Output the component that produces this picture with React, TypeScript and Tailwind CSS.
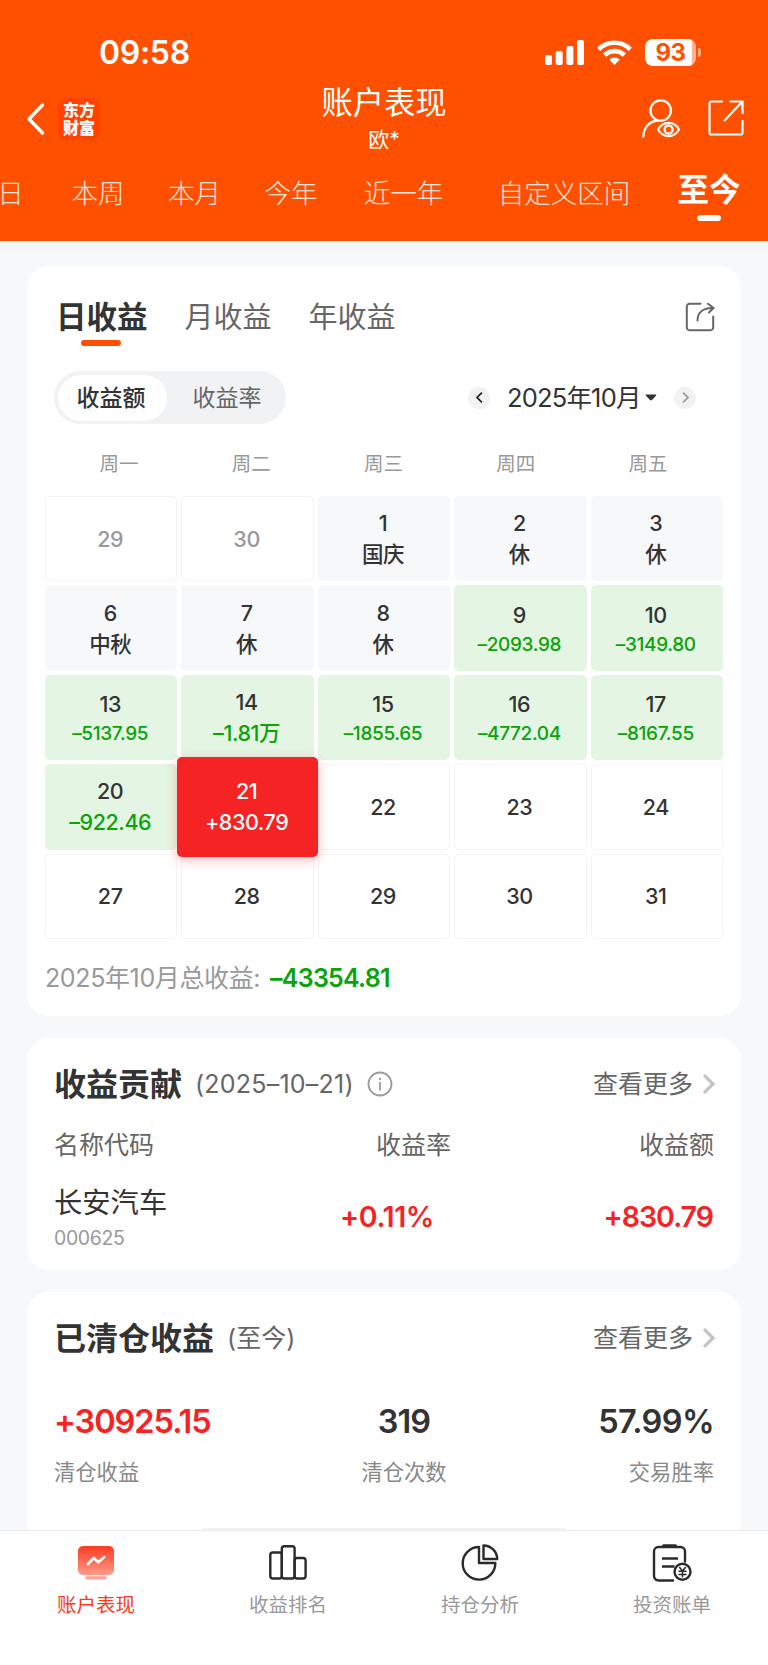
import React from "react";
import clsx from "clsx";

type DayKind = "outside" | "holiday" | "loss" | "selected" | "empty";

type Day = {
  day: number;
  kind: DayKind;
  note?: string;
};

const RANGES = [
  { label: "日", width: "w-[49px] -ml-[14px]" },
  { label: "本周", width: "w-[126px]" },
  { label: "本月", width: "w-[67px]" },
  { label: "今年", width: "w-[126px]" },
  { label: "近一年", width: "w-[99px]" },
  { label: "自定义区间", width: "w-[222px]" },
];

const WEEKDAYS = ["周一", "周二", "周三", "周四", "周五"];

const DAYS: Day[] = [
  { day: 29, kind: "outside" },
  { day: 30, kind: "outside" },
  { day: 1, kind: "holiday", note: "国庆" },
  { day: 2, kind: "holiday", note: "休" },
  { day: 3, kind: "holiday", note: "休" },
  { day: 6, kind: "holiday", note: "中秋" },
  { day: 7, kind: "holiday", note: "休" },
  { day: 8, kind: "holiday", note: "休" },
  { day: 9, kind: "loss", note: "–2093.98" },
  { day: 10, kind: "loss", note: "–3149.80" },
  { day: 13, kind: "loss", note: "–5137.95" },
  { day: 14, kind: "loss", note: "–1.81万" },
  { day: 15, kind: "loss", note: "–1855.65" },
  { day: 16, kind: "loss", note: "–4772.04" },
  { day: 17, kind: "loss", note: "–8167.55" },
  { day: 20, kind: "loss", note: "–922.46" },
  { day: 21, kind: "selected", note: "+830.79" },
  { day: 22, kind: "empty" },
  { day: 23, kind: "empty" },
  { day: 24, kind: "empty" },
  { day: 27, kind: "empty" },
  { day: 28, kind: "empty" },
  { day: 29, kind: "empty" },
  { day: 30, kind: "empty" },
  { day: 31, kind: "empty" },
];

export default function App() {
  return (
    <div className="flex h-[1665px] w-[768px] flex-col overflow-hidden bg-[#f6f8fa] font-['Inter','Noto_Sans_CJK_SC',sans-serif] text-[#333]">
      <Header />
      <main className="flex min-h-0 flex-1 flex-col gap-[22px] overflow-hidden px-[27px] pt-[25px]">
        <CalendarCard />
        <ContributionCard />
        <ClearedCard />
      </main>
      <BottomNav />
    </div>
  );
}

function Header() {
  return (
    <header className="flex h-[241px] shrink-0 flex-col bg-[#ff5000] text-white">
      <div className="flex h-[84px] items-center pt-[21px] pr-[67px] pl-[99px]">
        <span className="text-[32px] leading-none font-semibold tracking-[-0.01em]">09:58</span>
        <div className="ml-auto flex items-center gap-[13px]">
          <SignalIcon />
          <WifiIcon />
          <Battery />
        </div>
      </div>

      <div className="grid h-[77px] grid-cols-[200px_1fr_200px]">
        <div className="flex items-center pb-[8px] pl-[26px]">
          <svg width="19" height="34" viewBox="0 0 19 34" fill="none" stroke="white" strokeWidth="3.4" strokeLinecap="round" strokeLinejoin="round">
            <path d="M16.5 3 3 17l13.500 14" />
          </svg>
          <div className="ml-[13px] flex h-[42px] w-[42px] flex-col items-center justify-center rounded-[9px] bg-[#ff4200] text-[16px] leading-[18px] font-black">
            <span>东方</span>
            <span>财富</span>
          </div>
        </div>
        <div className="flex flex-col items-center">
          <h1 className="h-[37px] pt-px text-[31.300px] leading-[37px] font-normal">账户表现</h1>
          <span className="mt-[4px] text-[21px] leading-[30px]">欧*</span>
        </div>
        <div className="flex items-start justify-end gap-[27px] pt-[15px] pr-[23px]">
          <PersonEyeIcon />
          <svg width="38" height="38" viewBox="0 0 38 38" fill="none" stroke="white" strokeWidth="2.200">
            <path d="M16 2.500H4.500a2 2 0 0 0-2 2v29a2 2 0 0 0 2 2h29a2 2 0 0 0 2-2V21" />
            <path d="M22.500 2.500h13V15M35 3 17 22" />
          </svg>
        </div>
      </div>

      <nav className="flex h-[64px] items-center">
        {RANGES.map((r) => (
          <span
            key={r.label}
            className={clsx("shrink-0 text-center text-[26.500px] leading-[40px] font-light whitespace-nowrap text-white/85", r.width)}
          >
            {r.label}
          </span>
        ))}
        <span className="relative ml-[2px] w-[64px] text-center text-[31.500px] leading-[40px] font-bold whitespace-nowrap">
          <span className="relative -top-[3px]">至今</span>
          <i className="absolute bottom-[-8px] left-[20px] h-[6px] w-[24px] rounded-full bg-white" />
        </span>
      </nav>
    </header>
  );
}

function CalendarCard() {
  return (
    <section className="flex h-[750px] shrink-0 flex-col rounded-[22px] bg-white pt-[30px]">
      <div className="flex h-[41px] items-center pr-[26px] pl-[29px] whitespace-nowrap">
        <span className="relative text-[30.500px] leading-[41px] font-bold">
          日收益
          <i className="absolute top-[44px] left-[25px] h-[6px] w-[40px] rounded-full bg-[#ff5000]" />
        </span>
        <span className="ml-[37px] pt-px text-[29px] leading-[41px] text-[#666]">月收益</span>
        <span className="ml-[37px] pt-px text-[29px] leading-[41px] text-[#666]">年收益</span>
        <svg className="ml-auto" width="30" height="30" viewBox="0 0 30 30" fill="none" stroke="#666" strokeWidth="2" strokeLinecap="round">
          <path d="M15.500 1.800H4.500a2.700 2.700 0 0 0-2.700 2.700v21a2.700 2.700 0 0 0 2.700 2.700h21a2.700 2.700 0 0 0 2.700-2.700V14.500" />
          <path d="M12.500 18.500C12.500 10.500 18 6 27.500 6M23 1.800 28.500 6 24 10.500" />
        </svg>
      </div>

      <div className="mt-[34px] flex h-[53px] items-center pr-[45px] pl-[27px]">
        <div className="flex h-[53px] w-[232px] items-center rounded-full bg-[#f1f2f4] p-[3.500px] text-[23px]">
          <span className="flex h-[46px] w-[109px] items-center justify-center rounded-full bg-white pt-px pr-[2px] font-medium">收益额</span>
          <span className="flex flex-1 items-center justify-center pt-px pl-[5px] text-[#666]">收益率</span>
        </div>
        <div className="ml-auto flex items-center">
          <span className="flex h-[22px] w-[22px] items-center justify-center rounded-full bg-[#f1f2f4]">
            <Chevron dir="left" className="h-[11px] w-[7px] text-[#222]" />
          </span>
          <span className="ml-[17px] w-[133px] text-[25.500px] leading-[40px] tracking-[-0.032em] whitespace-nowrap">2025年10月</span>
          <svg className="ml-[5px]" width="12" height="7" viewBox="0 0 12 7" fill="#333">
            <path d="M1.500.5h9c.8 0 1.100.8.5 1.300L7 6a1.500 1.500 0 0 1-2 0L1 1.800C.400 1.300.7.5 1.500.5Z" />
          </svg>
          <span className="ml-[17px] flex h-[22px] w-[22px] items-center justify-center rounded-full bg-[#f1f2f4]">
            <Chevron dir="right" className="h-[11px] w-[7px] text-[#999]" />
          </span>
        </div>
      </div>

      <div className="mr-[27px] ml-[26px] mt-[25px] grid h-[30px] grid-cols-5 text-center text-[19.500px] leading-[30px] text-[#999]">
        {WEEKDAYS.map((w) => (
          <span key={w}>{w}</span>
        ))}
      </div>

      <div className="mx-[18px] mt-[17px] grid auto-rows-[85.400px] grid-cols-5 gap-[4px]">
        {DAYS.map((d, i) => (
          <DayCell key={i} {...d} />
        ))}
      </div>

      <div className="mt-[20px] flex h-[40px] items-center pl-[18px] text-[25px] whitespace-nowrap">
        <span className="tracking-[-0.015em] text-[#999]">2025年10月总收益:</span>
        <span className="ml-[10px] font-semibold tracking-[-0.03em] text-[#0aa30a]">–43354.81</span>
      </div>
    </section>
  );
}

function DayCell({ day, kind, note }: Day) {
  // long amounts drop one size so they stay inside the cell
  const small = !!note && note.length > 7;
  const selected = kind === "selected";

  return (
    <div className="relative">
      <div
        className={clsx(
          "absolute flex flex-col items-center justify-center rounded-[5px] pr-[2px] text-[21.500px] leading-[31px] font-medium tracking-[-0.02em]",
          selected ? "-inset-x-[4px] -inset-y-[7.300px] z-10 bg-[#f52323] text-white shadow-[0_3px_12px_rgba(245,35,35,0.3)]" : "inset-0",
          kind === "outside" && "border border-[#f3f4f6] text-[#999]",
          kind === "empty" && "border border-[#f3f4f6]",
          kind === "holiday" && "bg-[#f6f8fa]",
          kind === "loss" && "bg-[#e4f5e4]",
          small && "pt-[3px]",
          !small && "pt-px",
        )}
      >
        <span className={clsx(small && "leading-[29px]")}>{day}</span>
        {note ? (
          <span
            className={clsx(
              kind === "loss" && "text-[#0aa30a]",
              small && "text-[19px] leading-[29px] tracking-[-0.018em]",
            )}
          >
            {note}
          </span>
        ) : null}
      </div>
    </div>
  );
}

function ContributionCard() {
  return (
    <section className="h-[232px] shrink-0 rounded-[22px] bg-white px-[27px] pt-[26px]">
      <CardTitle title="收益贡献" sub="(2025–10–21)" info />
      <div className="mt-[22px] grid h-[40px] grid-cols-3 items-center text-[25px] text-[#666]">
        <span>名称代码</span>
        <span className="pr-[43px] text-right">收益率</span>
        <span className="text-right">收益额</span>
      </div>
      <div className="mt-[15px] grid h-[72px] grid-cols-3 items-center">
        <div className="flex flex-col">
          <span className="pt-px text-[28.300px] leading-[40px]">长安汽车</span>
          <span className="text-[19.500px] leading-[30px] tracking-[-0.02em] text-[#999]">000625</span>
        </div>
        <span className="pr-[60px] text-right text-[28.500px] font-semibold tracking-[-0.015em] text-[#f52323]">+0.11%</span>
        <span className="pr-px text-right text-[28.500px] font-semibold tracking-[-0.035em] text-[#f52323]">+830.79</span>
      </div>
    </section>
  );
}

function ClearedCard() {
  return (
    <section className="relative h-[260px] shrink-0 rounded-t-[22px] bg-white px-[27px] pt-[26px]">
      <CardTitle title="已清仓收益" sub="(至今)" />
      <div className="mt-[39px] grid grid-cols-3">
        <Stat value="+30925.15" label="清仓收益" className="items-start tracking-[-1.050px] text-[#f52323]" />
        <Stat value="319" label="清仓次数" className="items-center pl-[40px] tracking-[-0.900px]" />
        <Stat value="57.99%" label="交易胜率" className="items-end tracking-[-0.600px]" />
      </div>
      <div className="absolute top-[236px] left-[171px] h-[20px] w-[372px] rounded-t-[6px] bg-[#f1f2f4]" />
    </section>
  );
}

function CardTitle({ title, sub, info }: { title: string; sub: string; info?: boolean }) {
  return (
    <div className="flex h-[40px] items-center whitespace-nowrap">
      <h2 className="pt-px text-[32px] leading-[40px] font-bold">{title}</h2>
      <span className={clsx("ml-[13px] pt-px text-[25px] text-[#666]", info && "tracking-[0.009em]")}>{sub}</span>
      {info ? (
        <svg className="ml-[13px]" width="26" height="26" viewBox="0 0 26 26" fill="none" stroke="#999" strokeWidth="1.800">
          <circle cx="13" cy="13" r="11.500" />
          <path d="M13 11v8.500M13 6.700v2.200" />
        </svg>
      ) : null}
      <span className="ml-auto pt-px text-[25px] text-[#666]">查看更多</span>
      <Chevron dir="right" className="-mr-px ml-[9px] h-[20px] w-[13px] text-[#c4c4c4]" />
    </div>
  );
}

function Stat({ value, label, className }: { value: string; label: string; className: string }) {
  return (
    <div className={clsx("flex flex-col", className)}>
      <span className="text-[32.500px] leading-[50px] font-semibold">{value}</span>
      <span className="mt-[10px] text-[21.300px] leading-[30px] tracking-normal text-[#888]">{label}</span>
    </div>
  );
}

function BottomNav() {
  const items = [
    { label: "账户表现", icon: <ScreenIcon />, active: true },
    { label: "收益排名", icon: <BarsIcon /> },
    { label: "持仓分析", icon: <PieIcon /> },
    { label: "投资账单", icon: <BillIcon /> },
  ];
  return (
    <nav className="grid h-[135px] shrink-0 grid-cols-4 border-t border-[#ececee] bg-white pt-[13px]">
      {items.map((it) => (
        <div key={it.label} className="flex flex-col items-center">
          {it.icon}
          <span className={clsx("mt-[6px] text-[19.500px] leading-[30px]", it.active ? "text-[#fb3a20]" : "text-[#999]")}>
            {it.label}
          </span>
        </div>
      ))}
    </nav>
  );
}

function Chevron({ dir, className }: { dir: "left" | "right"; className: string }) {
  return (
    <svg className={className} viewBox="0 0 13 20" fill="none" stroke="currentColor" strokeWidth="3.200">
      <path d={dir === "left" ? "M11 1 2 10l9 9" : "M2 1l9 9-9 9"} />
    </svg>
  );
}

function SignalIcon() {
  return (
    <svg width="39" height="25" viewBox="0 0 39 25" fill="white">
      <rect x="0" y="15" width="7" height="10" rx="2" />
      <rect x="10.700" y="11" width="7" height="14" rx="2" />
      <rect x="21.400" y="6" width="7" height="19" rx="2" />
      <rect x="32" y="0" width="7" height="25" rx="2" />
    </svg>
  );
}

function WifiIcon() {
  return (
    <svg width="35" height="25" viewBox="0 0 35 25" fill="none" stroke="white" strokeWidth="4.600">
      <path d="M1.700 9.300a22.500 22.500 0 0 1 31.600 0" />
      <path d="M7.600 15.100a14.200 14.200 0 0 1 19.800 0" />
      <path d="M17.500 25l-5.300-5.400a7.600 7.600 0 0 1 10.600 0Z" fill="white" stroke="none" />
    </svg>
  );
}

function Battery() {
  return (
    <div className="flex items-center gap-[2px]">
      <div className="flex h-[27px] w-[51px] items-center justify-center rounded-[8px] bg-[linear-gradient(90deg,#fff_92%,#ffb090_92%)] text-[24px] leading-none font-bold tracking-[-0.02em] text-[#ff5000]">
        93
      </div>
      <i className="h-[9px] w-[3px] rounded-r-full bg-[#ffa67f]" />
    </div>
  );
}

function PersonEyeIcon() {
  return (
    <svg width="39" height="39" viewBox="0 0 39 39" fill="none" stroke="white" strokeWidth="2.300">
      <circle cx="19.700" cy="11.500" r="10.200" />
      <path d="M2.300 37.500C2.700 28.500 8.500 22 17 21.500" strokeLinecap="round" />
      <path d="M17 30.500c2.500-4.300 6.200-6.600 10.600-6.600S35.700 26.200 38 30.500c-2.400 4.300-6 6.600-10.400 6.600S19.500 34.800 17 30.500Z" />
      <circle cx="27.600" cy="30.500" r="4" />
    </svg>
  );
}

function ScreenIcon() {
  return (
    <svg width="38" height="40" viewBox="0 0 38 40" fill="none">
      <defs>
        <linearGradient id="screen" x1="0" y1="0" x2="0" y2="1">
          <stop offset="0" stopColor="#fb3a20" />
          <stop offset="1" stopColor="#ff9a8a" />
        </linearGradient>
      </defs>
      <rect x="1" y="2" width="36" height="29" rx="5" fill="url(#screen)" />
      <rect x="8.500" y="32.300" width="21" height="3.300" rx="1" fill="#ffa295" />
      <path d="m11 20 5.700-6 4.600 4.300 6-5.300" stroke="white" strokeWidth="2.600" strokeLinecap="round" strokeLinejoin="round" />
    </svg>
  );
}

function BarsIcon() {
  return (
    <svg width="38" height="40" viewBox="0 0 38 40" fill="none" stroke="#2b2b2b" strokeWidth="2.400">
      <rect x="1.300" y="8.500" width="11.500" height="26" rx="2.500" />
      <rect x="12.800" y="2.300" width="12.800" height="32.200" rx="2.500" />
      <rect x="25.600" y="14" width="11" height="20.500" rx="2.500" />
    </svg>
  );
}

function PieIcon() {
  return (
    <svg width="38" height="40" viewBox="0 0 38 40" fill="none" stroke="#2b2b2b" strokeWidth="2.400" strokeLinejoin="round">
      <path d="M18 3A16.300 16.300 0 1 0 34.300 19H18Z" />
      <path d="M22.500 1.500v13.500h13.700A13.700 13.700 0 0 0 22.500 1.500Z" />
    </svg>
  );
}

function BillIcon() {
  return (
    <svg width="40" height="40" viewBox="0 0 40 40" fill="none" stroke="#2b2b2b" strokeWidth="2.400">
      <path d="M22 36.500H6.500a4.500 4.500 0 0 1-4.500-4.500V7.500A4.500 4.500 0 0 1 6.500 3h22A4.500 4.500 0 0 1 33 7.500v11" />
      <path d="M11.500 1.800h12" strokeWidth="3" strokeLinecap="round" />
      <path d="M10 14.500h16M10 22.500h12.500" strokeWidth="2.600" />
      <circle cx="30.500" cy="27.700" r="8" fill="white" />
      <path d="m27.300 23 3.200 4 3.200-4M30.500 27v6.300M26.500 27.300h8M26.500 30.500h8" strokeWidth="1.600" />
    </svg>
  );
}
